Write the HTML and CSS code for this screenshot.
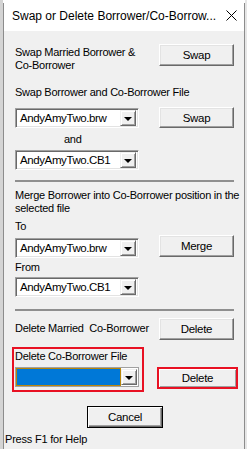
FILE: index.html
```html
<!DOCTYPE html>
<html lang="en">
<head>
    <meta charset="UTF-8">
    <meta name="viewport" content="width=device-width, initial-scale=1.0">
    <title>Swap or Delete Borrower/Co-Borrower</title>
    <link rel="stylesheet" href="styles.css">
</head>
<body>
    <div class="borde-izq"></div>

    <div class="ventana">
        <!-- Barra de titulo -->
        <div class="titulo">
            <span class="titulo-texto">Swap or Delete Borrower/Co-Borrow...</span>
            <svg class="cerrar" width="11" height="11" viewBox="0 0 11 11">
                <path d="M0.5 0.5 L10.5 10.5 M10.5 0.5 L0.5 10.5" stroke="#000" stroke-width="1" fill="none"/>
            </svg>
        </div>

        <div class="contenido">
            <!-- Intercambiar casados -->
            <div class="fila fila-casados">
                <div class="texto-dos">Swap Married Borrower &amp;<br>Co-Borrower</div>
                <button class="boton">Swap</button>
            </div>

            <!-- Intercambiar archivos -->
            <div class="etiqueta etq-archivo">Swap Borrower and Co-Borrower File</div>
            <div class="fila fila-combo">
                <div class="combo combo-bajo">
                    <span class="combo-texto">AndyAmyTwo.brw</span>
                    <span class="flecha"></span>
                </div>
                <button class="boton boton-21">Swap</button>
            </div>
            <div class="etiqueta etq-and">and</div>
            <div class="combo combo-and">
                <span class="combo-texto">AndyAmyTwo.CB1</span>
                <span class="flecha"></span>
            </div>

            <hr class="separador">

            <!-- Combinar -->
            <div class="etiqueta etq-merge">Merge Borrower into Co-Borrower position in the<br>selected file</div>
            <div class="etiqueta etq-to">To</div>
            <div class="fila fila-merge">
                <div class="combo combo-merge">
                    <span class="combo-texto">AndyAmyTwo.brw</span>
                    <span class="flecha"></span>
                </div>
                <button class="boton">Merge</button>
            </div>
            <div class="etiqueta etq-from">From</div>
            <div class="combo combo-from">
                <span class="combo-texto">AndyAmyTwo.CB1</span>
                <span class="flecha"></span>
            </div>

            <hr class="separador separador-2">

            <!-- Borrar -->
            <div class="fila fila-borrar">
                <div class="texto-borrar">Delete Married&nbsp; Co-Borrower</div>
                <button class="boton">Delete</button>
            </div>

            <div class="fila fila-marcas">
                <div class="marca-roja">
                    <div class="etiqueta">Delete Co-Borrower File</div>
                    <div class="combo combo-activo">
                        <span class="combo-texto"></span>
                        <span class="flecha"></span>
                    </div>
                </div>
                <button class="boton-rojo">Delete</button>
            </div>

            <button class="boton boton-defecto">Cancel</button>
        </div>

        <div class="estado">Press F1 for Help</div>
    </div>

    <div class="borde-der"></div>
</body>
</html>
```

FILE: styles.css
```css
body {
    margin: 0;
    padding: 0;
    display: flex;
    height: 449px;
    overflow: hidden;
    background-color: #ffffff;
    color: #000000;
    font-family: "Liberation Sans", Arial, sans-serif;
    font-size: 11px;
}

.borde-izq {
    width: 3px;
    background-color: #d4d4d4;
}

.borde-der {
    width: 2px;
    background-color: #e6e6e6;
}

.ventana {
    width: 240px;
    margin-top: 3px;
    border-left: 1px solid #8c8c8c;
    border-right: 1px solid #8c8c8c;
    background-color: #f0f0f0;
    display: flex;
    flex-direction: column;
}

/* Barra de titulo */
.titulo {
    height: 28px;
    background-color: #ffffff;
    display: flex;
    align-items: center;
    justify-content: space-between;
    padding: 0 7px 0 8px;
    flex-shrink: 0;
}

.titulo-texto {
    font-family: "Liberation Sans", Arial, sans-serif;
    font-size: 12px;
    white-space: nowrap;
    margin-top: -3px;
}

.cerrar {
    margin-top: -3px;
    flex-shrink: 0;
}

.contenido {
    padding: 0 10px 0 11px;
    display: flex;
    flex-direction: column;
    align-items: flex-start;
}

.fila {
    display: flex;
    justify-content: space-between;
    align-items: flex-start;
    width: 100%;
}

.etiqueta, .texto-dos, .texto-borrar {
    line-height: 13px;
    white-space: nowrap;
    letter-spacing: -0.25px;
}

/* Botones clasicos */
.boton {
    width: 75px;
    height: 22px;
    padding: 0;
    background-color: #f0f0f0;
    border-top: 1px solid #ffffff;
    border-left: 1px solid #ffffff;
    border-right: 1px solid #696969;
    border-bottom: 1px solid #696969;
    box-shadow: inset -1px -1px 0 #a0a0a0, inset 1px 1px 0 #e3e3e3;
    font-family: "Liberation Sans", Arial, sans-serif;
    font-size: 11.5px;
    letter-spacing: -0.3px;
    color: #000000;
}

.boton-21 {
    height: 21px;
}

.boton-defecto {
    width: 76px;
    margin: 14px 0 0 72px;
    border: 1px solid #000000;
    box-shadow: inset 1px 1px 0 #ffffff, inset -1px -1px 0 #696969, inset -2px -2px 0 #a0a0a0;
}

/* Combos */
.combo {
    width: 124px;
    height: 20px;
    box-sizing: border-box;
    background-color: #ffffff;
    border-top: 1px solid #a0a0a0;
    border-left: 1px solid #a0a0a0;
    border-right: 1px solid #ffffff;
    border-bottom: 1px solid #ffffff;
    box-shadow: inset 1px 1px 0 #696969, inset -1px -1px 0 #e3e3e3;
    display: flex;
    align-items: center;
    padding: 2px;
}

.combo-texto {
    flex: 1;
    padding-left: 2px;
    font-size: 11.5px;
    letter-spacing: -0.4px;
    line-height: 14px;
    white-space: nowrap;
    overflow: hidden;
}

.flecha {
    width: 16px;
    height: 16px;
    flex-shrink: 0;
    box-sizing: border-box;
    background-color: #f0f0f0;
    border-top: 1px solid #f0f0f0;
    border-left: 1px solid #f0f0f0;
    border-right: 1px solid #696969;
    border-bottom: 1px solid #696969;
    box-shadow: inset 1px 1px 0 #ffffff, inset -1px -1px 0 #a0a0a0;
    display: flex;
    align-items: center;
    justify-content: center;
}

.flecha::after {
    content: "";
    border-left: 4px solid transparent;
    border-right: 4px solid transparent;
    border-top: 4px solid #000000;
    margin-top: 1px;
}

.combo-activo {
    border: 1px solid #a0a0a0;
    box-shadow: none;
    padding: 0 1px 0 0;
}

.combo-activo .combo-texto {
    align-self: stretch;
    background-color: #0078d7;
    border: 1px solid #b8860b;
}

/* Separadores */
.separador {
    width: 100%;
    height: 0;
    margin: 10px 0 0 0;
    border: none;
    border-top: 2px solid #8f8f8f;
}

.separador-2 {
    margin-top: 12px;
}

/* Espacios verticales */
.fila-casados {
    margin-top: 13px;
}

.texto-dos {
    padding-top: 2px;
}

.etq-archivo {
    margin-top: 14px;
}

.fila-combo {
    margin-top: 8px;
}

.combo-bajo {
    margin-top: 1px;
}

.etq-and {
    margin: 5px 0 0 49px;
}

.combo-and {
    margin-top: 4px;
}

.etq-merge {
    margin-top: 7px;
}

.etq-to {
    margin-top: 5px;
}

.fila-merge {
    margin-top: 2px;
}

.combo-merge {
    margin-top: 3px;
}

.etq-from {
    margin-top: 3px;
}

.combo-from {
    margin-top: 3px;
}

.fila-borrar {
    margin-top: 7px;
}

.texto-borrar {
    padding-top: 4px;
}

/* Marcas rojas */
.fila-marcas {
    margin: 7px -4px 0 -3px;
    width: calc(100% + 7px);
}

.marca-roja {
    width: 132px;
    box-sizing: border-box;
    border: 2px solid #e81123;
    padding: 1px 0 3px 1px;
}

.marca-roja .combo {
    margin-top: 4px;
}

.boton-rojo {
    width: 81px;
    height: 22px;
    margin-top: 20px;
    padding: 0;
    background-color: #f0f0f0;
    border: 2px solid #e81123;
    box-shadow: inset 1px 1px 0 #ffffff, inset -1px -1px 0 #a0a0a0;
    font-family: "Liberation Sans", Arial, sans-serif;
    font-size: 11.5px;
    letter-spacing: -0.3px;
    color: #000000;
}

/* Barra de estado */
.estado {
    margin-top: 5px;
    padding-left: 1px;
    line-height: 13px;
    font-size: 11px;
    letter-spacing: -0.2px;
}
```
